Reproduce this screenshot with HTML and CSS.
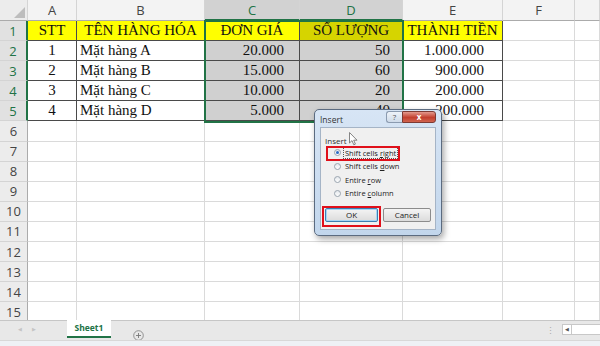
FILE: index.html
```html
<!DOCTYPE html>
<html>
<head>
<meta charset="utf-8">
<link rel="stylesheet" href="styles.css">
</head>
<body>
<div class="app">
  <div class="sheet">
    <div class="grid">
      <div class="ch corner"><span class="tri"></span></div>
      <div class="ch">A</div><div class="ch">B</div><div class="ch sel">C</div><div class="ch sel">D</div><div class="ch">E</div><div class="ch">F</div><div class="ch last"></div>

      <div class="rh sel">1</div>
      <div class="c d y ctr">STT</div><div class="c d y ctr">TÊN HÀNG HÓA</div><div class="c d y ctr">ĐƠN GIÁ</div><div class="c d ys ctr">SỐ LƯỢNG</div><div class="c d y ctr">THÀNH TIỀN</div><div class="c"></div><div class="c"></div>

      <div class="rh sel">2</div>
      <div class="c d ctr">1</div><div class="c d lft">Mặt hàng A</div><div class="c d s r1">20.000</div><div class="c d s r2">50</div><div class="c d r3">1.000.000</div><div class="c"></div><div class="c"></div>

      <div class="rh sel">3</div>
      <div class="c d ctr">2</div><div class="c d lft">Mặt hàng B</div><div class="c d s r1">15.000</div><div class="c d s r2">60</div><div class="c d r3">900.000</div><div class="c"></div><div class="c"></div>

      <div class="rh sel">4</div>
      <div class="c d ctr">3</div><div class="c d lft">Mặt hàng C</div><div class="c d s r1">10.000</div><div class="c d s r2">20</div><div class="c d r3">200.000</div><div class="c"></div><div class="c"></div>

      <div class="rh sel">5</div>
      <div class="c d ctr">4</div><div class="c d lft">Mặt hàng D</div><div class="c d s r1">5.000</div><div class="c d s r2">40</div><div class="c d r3">200.000</div><div class="c"></div><div class="c"></div>

      <div class="rh">6</div><div class="c"></div><div class="c"></div><div class="c"></div><div class="c"></div><div class="c"></div><div class="c"></div><div class="c"></div>
      <div class="rh">7</div><div class="c"></div><div class="c"></div><div class="c"></div><div class="c"></div><div class="c"></div><div class="c"></div><div class="c"></div>
      <div class="rh">8</div><div class="c"></div><div class="c"></div><div class="c"></div><div class="c"></div><div class="c"></div><div class="c"></div><div class="c"></div>
      <div class="rh">9</div><div class="c"></div><div class="c"></div><div class="c"></div><div class="c"></div><div class="c"></div><div class="c"></div><div class="c"></div>
      <div class="rh">10</div><div class="c"></div><div class="c"></div><div class="c"></div><div class="c"></div><div class="c"></div><div class="c"></div><div class="c"></div>
      <div class="rh">11</div><div class="c"></div><div class="c"></div><div class="c"></div><div class="c"></div><div class="c"></div><div class="c"></div><div class="c"></div>
      <div class="rh">12</div><div class="c"></div><div class="c"></div><div class="c"></div><div class="c"></div><div class="c"></div><div class="c"></div><div class="c"></div>
      <div class="rh">13</div><div class="c"></div><div class="c"></div><div class="c"></div><div class="c"></div><div class="c"></div><div class="c"></div><div class="c"></div>
      <div class="rh">14</div><div class="c"></div><div class="c"></div><div class="c"></div><div class="c"></div><div class="c"></div><div class="c"></div><div class="c"></div>
      <div class="rh">15</div><div class="c"></div><div class="c"></div><div class="c"></div><div class="c"></div><div class="c"></div><div class="c"></div><div class="c"></div>
    </div>
    <div class="selbox"></div>

    <div class="dlg">
      <div class="dlg-title">
        <span class="dlg-name">Insert</span>
        <span class="help">?</span>
        <span class="close">x</span>
      </div>
      <div class="dlg-body">
        <div class="grp">Insert</div>
        <div class="opt"><span class="radio on"></span><span class="lbl focus">Shift cells <u>r</u>ight</span></div>
        <div class="opt"><span class="radio"></span><span class="lbl">Shift cells <u>d</u>own</span></div>
        <div class="opt"><span class="radio"></span><span class="lbl">Entire <u>r</u>ow</span></div>
        <div class="opt"><span class="radio"></span><span class="lbl">Entire <u>c</u>olumn</span></div>
        <div class="btns">
          <span class="btn def">OK</span>
          <span class="btn">Cancel</span>
        </div>
      </div>
      <div class="mark mark-opt"></div>
      <div class="mark mark-ok"></div>
      <svg class="cursor" width="9" height="14" viewBox="0 0 9 14"><path d="M0.5 0.5 L0.5 11 L3 8.6 L4.8 12.8 L6.4 12.1 L4.7 8.2 L8 8.2 Z" fill="#fff" stroke="#777" stroke-width="0.9"/></svg>
    </div>
  </div>

  <div class="tabbar">
    <div class="nav"><span class="arr">&#9664;</span><span class="arr">&#9654;</span></div>
    <div class="tab">Sheet1</div>
    <div class="add"><svg width="11" height="11" viewBox="0 0 11 11"><circle cx="5.5" cy="5.5" r="4.8" fill="none" stroke="#888" stroke-width="0.9"/><path d="M5.5 3v5M3 5.5h5" stroke="#777" stroke-width="0.9"/></svg></div>
    <div class="spacer"></div>
    <div class="split">&#8942;</div>
    <div class="hs"><span class="hbtn">&#9664;</span><span class="htrack"></span></div>
  </div>
  <div class="status"></div>
</div>
</body>
</html>
```

FILE: styles.css
```css
* { box-sizing: border-box; }
html, body { margin: 0; padding: 0; background: #fff; }
.app { width: 600px; height: 346px; overflow: hidden; display: flex; flex-direction: column; font-family: "Liberation Serif", "Times New Roman", serif; }
.sheet { position: relative; height: 320px; overflow: hidden; }
.grid {
  display: grid;
  grid-template-columns: 28px 49px 128px 95px 103px 100px 72px 25px;
  grid-template-rows: 21px repeat(15, 20.1px);
}
.ch {
  background: #f3f3f3;
  border-right: 1px solid #d4d4d4;
  border-bottom: 1px solid #ababab;
  font-family: "Open Sans", "Liberation Sans", sans-serif;
  font-size: 13px;
  color: #444;
  display: flex; align-items: center; justify-content: center;
}
.ch.sel { background: #d2d2d2; color: #217346; border-bottom: 2px solid #217346; }
.ch.corner { position: relative; background: #ececec; }
.tri { position: absolute; right: 2px; bottom: 2px; width: 0; height: 0; border-left: 11px solid transparent; border-bottom: 11px solid #bdbdbd; }
.rh {
  background: #ececec;
  border-right: 1px solid #ababab;
  border-bottom: 1px solid #d4d4d4;
  font-family: "Open Sans", "Liberation Sans", sans-serif;
  font-size: 13px;
  line-height: 14px;
  color: #444;
  display: flex; align-items: center; justify-content: center;
}
.rh.sel { background: #e1e1e1; color: #217346; border-right: 2px solid #217346; }
.c {
  border-right: 1px solid #dadada;
  border-bottom: 1px solid #dadada;
  font-size: 15px;
  color: #111;
  display: flex; align-items: center;
  white-space: nowrap;
  overflow: visible;
}
.c.d { border-right-color: #4a4a4a; border-bottom-color: #4a4a4a; }
.y { background: #ffff00; }
.ys { background: #d6d400; }
.s { background: #d0d0d0; }
.ctr { justify-content: center; }
.lft { padding-left: 3px; }
.r1 { justify-content: flex-end; padding-right: 15px; }
.r2 { justify-content: flex-end; padding-right: 12px; }
.r3 { justify-content: flex-end; padding-right: 18px; }
.selbox { position: absolute; left: 204px; top: 20px; width: 200px; height: 103px; border: 2px solid #217346; pointer-events: none; }

/* dialog */
.dlg {
  position: absolute; left: 314px; top: 109px; width: 128px; height: 127px;
  background: linear-gradient(#d7e5f5, #c2d6ec);
  border: 1px solid #5b6b80;
  border-radius: 5px;
  box-shadow: 2px 3px 6px rgba(0,0,0,0.35);
  font-family: "Open Sans", "Liberation Sans", sans-serif;
  font-size: 8px;
  color: #222;
  display: flex; flex-direction: column;
}
.dlg-title { height: 17px; display: flex; align-items: flex-start; padding-left: 5px; }
.dlg-name { padding-top: 4px; font-size: 8.5px; color: #333; }
.help {
  margin-left: auto; margin-top: 1px;
  width: 16px; height: 12px;
  background: linear-gradient(#eef3f9, #cfdbe9);
  border: 1px solid #8b9bb0; border-right: none;
  border-radius: 3px 0 0 3px;
  font-size: 8px; color: #555; text-align: center; line-height: 10px;
}
.close {
  margin-top: 1px; margin-right: 5px;
  width: 34px; height: 12px;
  background: linear-gradient(#e49a8e, #c3402f 55%, #d0644f);
  border: 1px solid #7d3a33;
  border-radius: 0 3px 3px 0;
  color: #fff; font-size: 8px; font-weight: bold; text-align: center; line-height: 9px;
}
.dlg-body {
  flex: 1;
  margin: 0 5px 5px 5px;
  background: #f0f0f0;
  border: 1px solid #a5b4c6;
  padding: 7px 0 0 4px;
  display: flex; flex-direction: column;
}
.grp { color: #333; height: 11px; line-height: 11px; }
.opt { height: 13.5px; display: flex; align-items: center; padding-left: 9px; gap: 3px; white-space: nowrap; font-size: 7.5px; }
.radio { flex: none; width: 7px; height: 7px; border-radius: 50%; border: 1px solid #9aa4af; background: linear-gradient(#e4e8ec, #fdfdfd); position: relative; }
.radio.on::after { content: ""; position: absolute; left: 1px; top: 1px; width: 3px; height: 3px; border-radius: 50%; background: #2b6ac4; }
.lbl { padding: 0 1px; line-height: 10px; }
.lbl.focus { outline: 1px dotted #555; }
.btns { display: flex; gap: 5px; margin-top: 8px; padding-left: 0; }
.btn {
  width: 53px; height: 14px;
  border: 1px solid #8c8c8c;
  border-radius: 2px;
  background: linear-gradient(#f4f4f4, #dcdcdc);
  text-align: center; line-height: 12px; font-size: 8px; color: #222;
}
.btn.def { border-color: #3c7fb1; box-shadow: inset 0 0 0 1px #a6d5f5; }
.btn:last-child { width: 48px; }
.mark { position: absolute; border: 2px solid #e0101a; pointer-events: none; }
.mark-opt { left: 11px; top: 36px; width: 74px; height: 15px; }
.mark-ok { left: 7px; top: 96px; width: 59px; height: 21px; }
.cursor { position: absolute; left: 34px; top: 22px; }

/* tabs */
.tabbar {
  height: 20px;
  background: #e8e8e8;
  border-top: 1px solid #c6c6c6;
  display: flex; align-items: flex-start;
  font-family: "Open Sans", "Liberation Sans", sans-serif;
}
.nav { width: 67px; display: flex; gap: 10px; padding-left: 18px; padding-top: 5px; }
.arr { font-size: 5px; color: #c4c4c4; }
.tab {
  width: 44px; height: 18px;
  background: #fff;
  border-bottom: 2px solid #217346;
  color: #217346; font-weight: bold; font-size: 8.5px;
  text-align: center; line-height: 16px;
  margin-top: -1px;
}
.add { margin-left: 22px; padding-top: 3px; }
.spacer { flex: 1; }
.split { color: #aaa; font-size: 9px; padding-top: 3px; margin-right: 7px; }
.hs { display: flex; margin-top: 3px; }
.hbtn { width: 10px; height: 11px; background: #fff; border: 1px solid #c8c8c8; font-size: 5px; color: #555; text-align: center; line-height: 9px; }
.htrack { width: 28px; height: 11px; background: #fff; border-top: 1px solid #c8c8c8; border-bottom: 1px solid #c8c8c8; }
.status { height: 6px; background: #eef1f5; border-top: 1px solid #d8d8d8; }
```
